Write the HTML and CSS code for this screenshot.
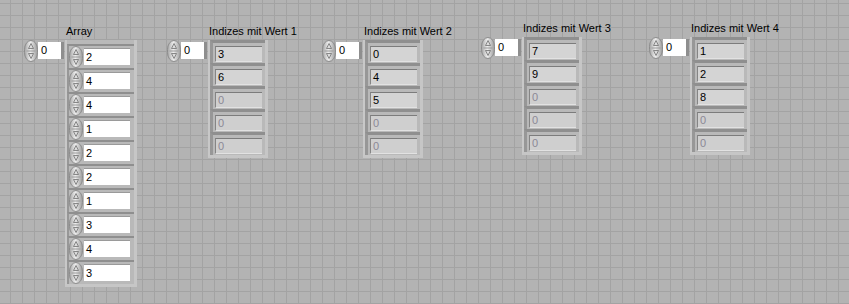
FILE: index.html
```html
<!DOCTYPE html>
<html lang="de">
<head>
    <meta charset="UTF-8">
    <title>Indizes mit Wert</title>
    <link rel="stylesheet" href="styles.css">
</head>
<body>
    <div class="panel">
        <svg class="defs" width="0" height="0">
            <defs>
                <linearGradient id="spg" x1="0" x2="1" y1="0" y2="0">
                    <stop offset="0" stop-color="#a4a4a4"/>
                    <stop offset="0.45" stop-color="#eeeeee"/>
                    <stop offset="1" stop-color="#9c9c9c"/>
                </linearGradient>
                <symbol id="sp" viewBox="0 0 14 22">
                    <rect x="0.5" y="0.5" width="13" height="21" rx="6.5" ry="9" fill="url(#spg)" stroke="#8c8c8c"/>
                    <path d="M7 3.5 L4.5 8.5 H9.5 Z" fill="#dcdcdc" stroke="#707070" stroke-width="0.8"/>
                    <path d="M2.5 11 H11.5" stroke="#9a9a9a" stroke-width="1"/>
                    <path d="M4.5 13.5 H9.5 L7 18.5 Z" fill="#dcdcdc" stroke="#707070" stroke-width="0.8"/>
                </symbol>
            </defs>
        </svg>

        <!-- Array (control) -->
        <div class="ctl c-array">
            <div class="index"><svg class="spin"><use href="#sp"/></svg><span class="idx">0</span></div>
            <div class="col">
                <div class="lbl">Array</div>
                <div class="frame frame-ctl">
                    <div class="cell"><svg class="spin"><use href="#sp"/></svg><span class="num">2</span></div>
                    <div class="cell"><svg class="spin"><use href="#sp"/></svg><span class="num">4</span></div>
                    <div class="cell"><svg class="spin"><use href="#sp"/></svg><span class="num">4</span></div>
                    <div class="cell"><svg class="spin"><use href="#sp"/></svg><span class="num">1</span></div>
                    <div class="cell"><svg class="spin"><use href="#sp"/></svg><span class="num">2</span></div>
                    <div class="cell"><svg class="spin"><use href="#sp"/></svg><span class="num">2</span></div>
                    <div class="cell"><svg class="spin"><use href="#sp"/></svg><span class="num">1</span></div>
                    <div class="cell"><svg class="spin"><use href="#sp"/></svg><span class="num">3</span></div>
                    <div class="cell"><svg class="spin"><use href="#sp"/></svg><span class="num">4</span></div>
                    <div class="cell"><svg class="spin"><use href="#sp"/></svg><span class="num">3</span></div>
                </div>
            </div>
        </div>

        <!-- Indicators -->
        <div class="ctl c-ind1">
            <div class="index"><svg class="spin"><use href="#sp"/></svg><span class="idx">0</span></div>
            <div class="col">
                <div class="lbl">Indizes mit Wert 1</div>
                <div class="frame frame-ind">
                    <div class="cell"><span class="out">3</span></div>
                    <div class="cell"><span class="out">6</span></div>
                    <div class="cell"><span class="out off">0</span></div>
                    <div class="cell"><span class="out off">0</span></div>
                    <div class="cell"><span class="out off">0</span></div>
                </div>
            </div>
        </div>

        <div class="ctl c-ind2">
            <div class="index"><svg class="spin"><use href="#sp"/></svg><span class="idx">0</span></div>
            <div class="col">
                <div class="lbl">Indizes mit Wert 2</div>
                <div class="frame frame-ind">
                    <div class="cell"><span class="out">0</span></div>
                    <div class="cell"><span class="out">4</span></div>
                    <div class="cell"><span class="out">5</span></div>
                    <div class="cell"><span class="out off">0</span></div>
                    <div class="cell"><span class="out off">0</span></div>
                </div>
            </div>
        </div>

        <div class="ctl c-ind3">
            <div class="index"><svg class="spin"><use href="#sp"/></svg><span class="idx">0</span></div>
            <div class="col">
                <div class="lbl">Indizes mit Wert 3</div>
                <div class="frame frame-ind">
                    <div class="cell"><span class="out">7</span></div>
                    <div class="cell"><span class="out">9</span></div>
                    <div class="cell"><span class="out off">0</span></div>
                    <div class="cell"><span class="out off">0</span></div>
                    <div class="cell"><span class="out off">0</span></div>
                </div>
            </div>
        </div>

        <div class="ctl c-ind4">
            <div class="index"><svg class="spin"><use href="#sp"/></svg><span class="idx">0</span></div>
            <div class="col">
                <div class="lbl">Indizes mit Wert 4</div>
                <div class="frame frame-ind">
                    <div class="cell"><span class="out">1</span></div>
                    <div class="cell"><span class="out">2</span></div>
                    <div class="cell"><span class="out">8</span></div>
                    <div class="cell"><span class="out off">0</span></div>
                    <div class="cell"><span class="out off">0</span></div>
                </div>
            </div>
        </div>
    </div>
</body>
</html>
```

FILE: styles.css
```css
* {
    box-sizing: border-box;
}
body {
    margin: 0;
}
.defs {
    position: absolute;
}
.panel {
    position: relative;
    width: 849px;
    height: 304px;
    overflow: hidden;
    background-color: #b3b3b3;
    background-image:
        linear-gradient(to right, #a3a3a3 1px, transparent 1px),
        linear-gradient(to bottom, #a3a3a3 1px, transparent 1px);
    background-size: 12px 12px;
    background-position: 10px 3px;
    font: 11px/14px "Liberation Sans", Arial, sans-serif;
    color: #000;
}

/* controls sit on the front panel canvas */
.ctl {
    position: absolute;
    display: flex;
    align-items: flex-start;
}
.c-array { left: 24px; top: 24px; }
.c-ind1 { left: 167px; top: 24px; }
.c-ind2 { left: 322px; top: 24px; }
.c-ind3 { left: 481px; top: 21px; }
.c-ind4 { left: 649px; top: 21px; }

.index {
    display: flex;
    width: 41px;
    margin-top: 16px;
}
.spin {
    display: block;
    flex: none;
    width: 14px;
    height: 22px;
}
.idx {
    width: 26px;
    height: 17px;
    margin-top: 2px;
    padding-left: 3px;
    line-height: 16px;
    background: #fff;
    border-right: 3px solid #8e8e8e;
}

.col {
    display: flex;
    flex-direction: column;
}
.lbl {
    height: 14px;
    margin-bottom: 2px;
    padding-left: 1px;
    white-space: nowrap;
}

/* array frame */
.frame {
    background: #b9b9b9;
    border-left: 2px solid #c8c8c8;
    border-right: 3px solid #c6c6c6;
    border-bottom: 3px solid #c6c6c6;
}
.frame-ctl {
    width: 72px;
    padding-top: 4px;
}
.frame-ind {
    width: 60px;
}
.cell {
    display: flex;
    border-top: 3px solid #8f8f8f;
    border-left: 3px solid #979797;
}
.frame-ctl .cell {
    height: 24px;
    border-top-width: 2px;
    border-left-width: 2px;
    padding: 0 4px 0 0;
    gap: 1px;
}
.frame-ind .cell {
    height: 23px;
    padding: 3px 3px 1px 2px;
}

.num {
    width: 46px;
    height: 17px;
    margin-top: 2px;
    padding-left: 2px;
    line-height: 16px;
    background: #fff;
    border-top: 1px solid #9a9a9a;
}
.out {
    width: 47px;
    height: 16px;
    padding-left: 2px;
    line-height: 15px;
    background: #d4d4d4;
    border-top: 1px solid #7c7c7c;
    border-left: 1px solid #858585;
    border-bottom: 1px solid #e2e2e2;
}
.out.off {
    color: #8c8896;
    background: #cfcfcf;
}
```
